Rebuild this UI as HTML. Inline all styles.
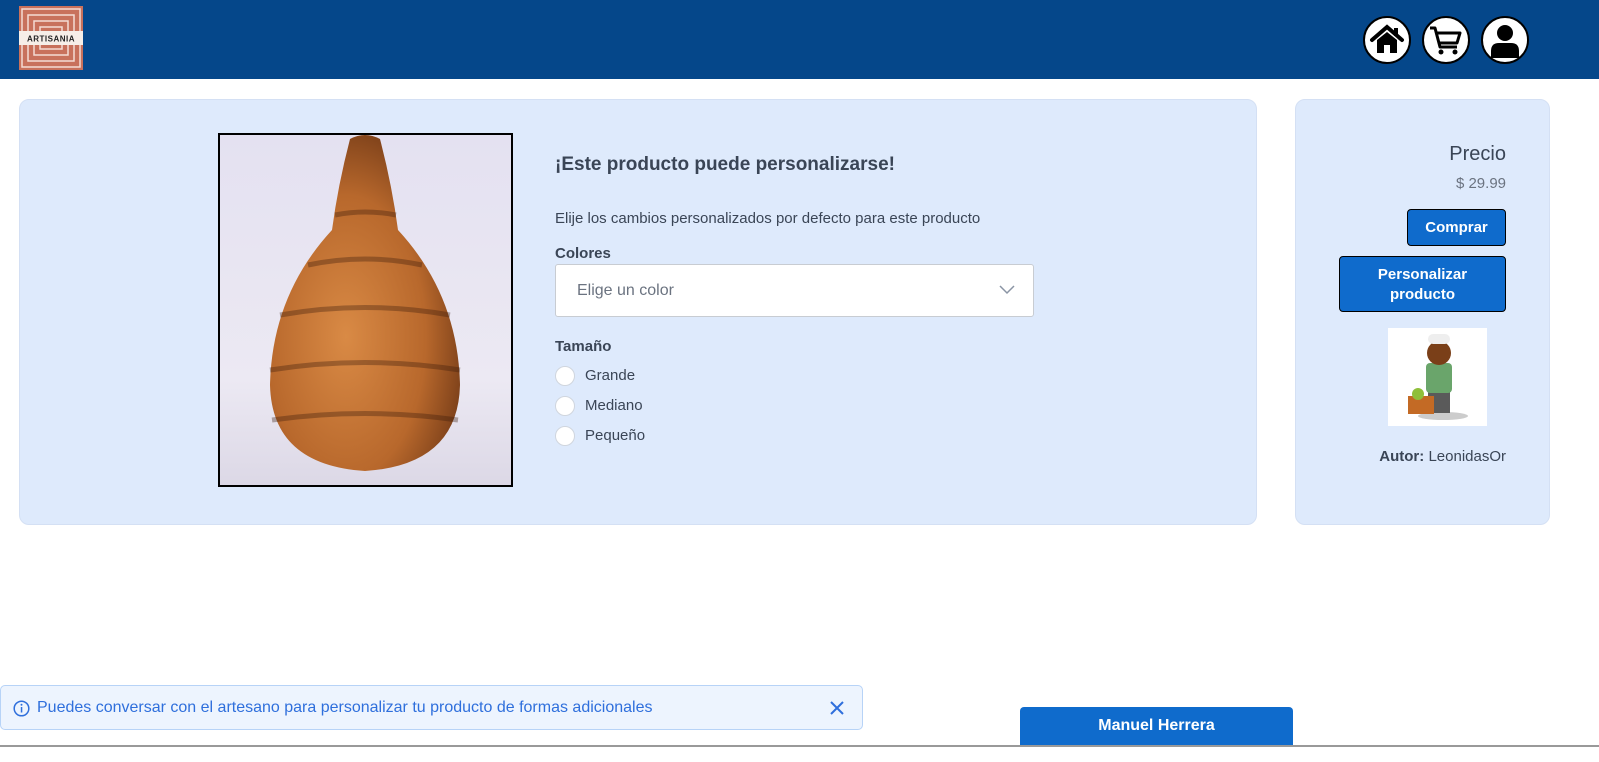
<!DOCTYPE html>
<html><head><meta charset="utf-8"><style>
*{box-sizing:border-box;margin:0;padding:0}
body{width:1599px;height:762px;overflow:hidden;background:#fff;font-family:"Liberation Sans",sans-serif;color:#3a4556;position:relative}
.hdr{position:absolute;left:0;top:0;width:1599px;height:79px;background:#05478a}
.logo{position:absolute;left:19px;top:6px;width:64px;height:64px;background:#c8715c}
.ic{position:absolute;top:16px;width:48px;height:48px;border-radius:50%;background:#fff;border:2px solid #000}
.card{position:absolute;background:#deeafc;border-radius:10px;border:1px solid #d4e0f4}
.btn{position:absolute;background:#0f6bcc;color:#fff;font-weight:bold;font-size:15px;text-align:center;border:1px solid #000;border-radius:4px}
.radio{position:absolute;left:555px;width:20px;height:20px;border-radius:50%;background:#fff;border:1px solid #d0d6de}
.rl{position:absolute;left:585px;font-size:15px}
</style></head><body>
<div class="hdr">
 <div class="logo">
  <svg width="64" height="64"><g fill="none" stroke="#f4dcd4" stroke-width="1.5">
  <rect x="3" y="3" width="58" height="58"/><rect x="9" y="9" width="46" height="46"/><rect x="15" y="15" width="34" height="34"/><rect x="21" y="21" width="22" height="22"/><line x1="3" y1="32" x2="61" y2="32"/></g>
  <rect x="0" y="25" width="64" height="14" fill="#f6eee8"/>
  <text x="32" y="35.5" font-size="8" font-weight="bold" text-anchor="middle" fill="#222" font-family="Liberation Sans" letter-spacing="0.5">ARTISANIA</text></svg>
 </div>
 <div class="ic" style="left:1363px"><svg width="44" height="44" viewBox="0 0 44 44"><path d="M7 22 L22 9 L37 22" fill="none" stroke="#000" stroke-width="4" stroke-linecap="round"/><rect x="29" y="10" width="4" height="8"/><path d="M12 22 L22 14 L32 22 V35 H25 V27 H19 V35 H12Z"/></svg></div>
 <div class="ic" style="left:1422px"><svg width="44" height="44" viewBox="0 0 44 44"><path d="M6 10 H11 L16 29 H33 M12 15 H36 L33 25 H15" fill="none" stroke="#000" stroke-width="3" stroke-linejoin="round"/><circle cx="17" cy="34" r="2.5"/><circle cx="31" cy="34" r="2.5"/></svg></div>
 <div class="ic" style="left:1481px"><svg width="44" height="44" viewBox="0 0 44 44"><circle cx="22" cy="15" r="8"/><path d="M8 40 V33 Q8 25 16 25 H28 Q36 25 36 33 V40Z"/></svg></div>
</div>

<div class="card" style="left:19px;top:99px;width:1238px;height:426px"></div>
<div style="position:absolute;left:218px;top:133px;width:295px;height:354px;border:2px solid #000;background:linear-gradient(#e4e1f1,#ece9f3 70%,#dcd8e6);overflow:hidden">
 <svg width="291" height="350" viewBox="0 0 291 350">
  <defs><radialGradient id="g" cx="0.4" cy="0.6" r="0.7"><stop offset="0" stop-color="#d98a45"/><stop offset="0.6" stop-color="#b8682c"/><stop offset="1" stop-color="#6a3414"/></radialGradient></defs>
  <path d="M130 4 Q145 -4 160 4 Q172 50 178 95 Q238 160 240 250 Q238 330 145 336 Q52 330 50 250 Q52 160 112 95 Q118 50 130 4Z" fill="url(#g)"/>
  <g stroke="#3a1a0a" stroke-width="5" opacity="0.35" fill="none"><path d="M88 130 Q145 118 202 130"/><path d="M60 180 Q145 165 230 180"/><path d="M50 235 Q145 220 240 235"/><path d="M52 285 Q145 272 238 285"/><path d="M115 80 Q145 74 176 80"/></g>
 </svg>
</div>
<div style="position:absolute;left:555px;top:154px;font-size:19px;font-weight:bold">¡Este producto puede personalizarse!</div>
<div style="position:absolute;left:555px;top:210px;font-size:15px">Elije los cambios personalizados por defecto para este producto</div>
<div style="position:absolute;left:555px;top:245px;font-size:15px;font-weight:bold">Colores</div>
<div style="position:absolute;left:555px;top:264px;width:479px;height:53px;background:#fff;border:1px solid #c8ccd2;border-radius:3px">
 <span style="position:absolute;left:21px;top:17px;font-size:16px;color:#6b7380">Elige un color</span>
 <svg style="position:absolute;right:18px;top:20px" width="16" height="10"><path d="M1 1 L8 8 L15 1" fill="none" stroke="#8a94a4" stroke-width="1.5"/></svg>
</div>
<div style="position:absolute;left:555px;top:338px;font-size:15px;font-weight:bold">Tamaño</div>
<div class="radio" style="top:366px"></div><div class="rl" style="top:367px">Grande</div>
<div class="radio" style="top:396px"></div><div class="rl" style="top:397px">Mediano</div>
<div class="radio" style="top:426px"></div><div class="rl" style="top:427px">Pequeño</div>

<div class="card" style="left:1295px;top:99px;width:255px;height:426px"></div>
<div style="position:absolute;right:93px;top:143px;font-size:20px">Precio</div>
<div style="position:absolute;right:93px;top:175px;font-size:15px;color:#6b7380">$ 29.99</div>
<div class="btn" style="left:1407px;top:209px;width:99px;height:37px;line-height:35px">Comprar</div>
<div class="btn" style="left:1339px;top:256px;width:167px;height:56px;padding-top:8px;line-height:20px">Personalizar<br>producto</div>
<div style="position:absolute;left:1388px;top:328px;width:99px;height:98px;background:#fff">
 <svg width="99" height="98"><ellipse cx="55" cy="88" rx="25" ry="4" fill="#ccc"/><rect x="40" y="55" width="22" height="30" fill="#5a5a5a"/><rect x="38" y="35" width="26" height="30" rx="4" fill="#6aa56b"/><circle cx="51" cy="25" r="12" fill="#7a3f18"/><rect x="40" y="6" width="22" height="10" rx="5" fill="#eee"/><rect x="20" y="68" width="26" height="18" fill="#c36a25"/><circle cx="30" cy="66" r="6" fill="#8fbf3a"/></svg>
</div>
<div style="position:absolute;right:93px;top:448px;font-size:15px"><b>Autor:</b> LeonidasOr</div>

<div style="position:absolute;left:0;top:685px;width:863px;height:45px;background:#edf4fe;border:1px solid #b7d3f7;border-radius:5px">
 <svg style="position:absolute;left:12px;top:14px" width="17" height="17"><circle cx="8.5" cy="8.5" r="7.3" fill="none" stroke="#2f6fdc" stroke-width="1.5"/><rect x="7.8" y="7" width="1.5" height="5.5" fill="#2f6fdc"/><circle cx="8.5" cy="4.8" r="1" fill="#2f6fdc"/></svg>
 <span style="position:absolute;left:36px;top:13px;font-size:16px;color:#2f6fdc">Puedes conversar con el artesano para personalizar tu producto de formas adicionales</span>
 <svg style="position:absolute;left:829px;top:15px" width="14" height="14"><path d="M1 1 L13 13 M13 1 L1 13" stroke="#2f6fdc" stroke-width="2"/></svg>
</div>
<div style="position:absolute;left:1020px;top:707px;width:273px;height:38px;background:#0f6bcc;color:#fff;font-weight:bold;font-size:16px;text-align:center;line-height:38px;border-radius:4px 4px 0 0">Manuel Herrera</div>
<div style="position:absolute;left:0;top:745px;width:1599px;height:2px;background:#999"></div>
</body></html>
